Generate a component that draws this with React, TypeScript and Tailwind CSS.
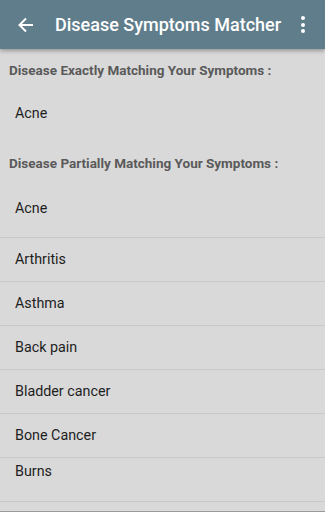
import React from "react";

const font = { fontFamily: "Roboto, 'Noto Sans', sans-serif" };

function Row({ label, className = "" }: { label: string; className?: string }) {
  return (
    <div className={`h-[44px] border-b border-[#c9c9c9] flex items-center pl-[15px] text-[14.3px] text-[#1e1e1e] ${className}`}>
      {label}
    </div>
  );
}

export default function App() {
  return (
    <div className="w-[325px] h-[512px] bg-[#d9d9d9] overflow-hidden flex flex-col" style={font}>
      <div className="h-[49px] shrink-0 bg-[#607d8b] flex items-center shadow-[0_2px_4px_rgba(0,0,0,0.3)] relative z-10">
        <div className="w-[55px] shrink-0 flex justify-center pr-[4px]">
          <svg width="16" height="16" viewBox="0 0 16 16" fill="none">
            <path d="M15 8H2M8 1.5L1.5 8L8 14.5" stroke="white" strokeWidth="2" />
          </svg>
        </div>
        <div className="flex-1 whitespace-nowrap text-white text-[18px] font-medium leading-none">Disease Symptoms Matcher</div>
        <div className="w-[44px] shrink-0 flex justify-center">
          <div className="flex flex-col gap-[2.5px]">
            <span className="w-[4px] h-[4px] rounded-full bg-white" />
            <span className="w-[4px] h-[4px] rounded-full bg-white" />
            <span className="w-[4px] h-[4px] rounded-full bg-white" />
          </div>
        </div>
      </div>
      <div className="h-[42px] flex items-center pl-[9px] whitespace-nowrap text-[13.5px] font-bold text-[#5a5a5a]">
        Disease Exactly Matching Your Symptoms :
      </div>
      <div className="h-[46px] flex items-center pl-[15px] text-[14.3px] text-[#1e1e1e]">Acne</div>
      <div className="h-[52px] flex items-center pl-[9px] whitespace-nowrap text-[13.5px] font-bold text-[#5a5a5a]">
        Disease Partially Matching Your Symptoms :
      </div>
      <div className="h-[49px] border-b border-[#c9c9c9] pt-[9px] pl-[15px] text-[14.3px] leading-[20px] text-[#1e1e1e]">Acne</div>
      <Row label="Arthritis" />
      <Row label="Asthma" />
      <Row label="Back pain" />
      <Row label="Bladder cancer" />
      <Row label="Bone Cancer" />
      <div className="h-[44px] border-b border-[#c9c9c9] pt-[3px] pl-[15px] text-[14.3px] leading-[20px] text-[#1e1e1e]">Burns</div>
      <div className="flex-1" />
      <div className="h-[1px] bg-[#9a9a9a]" />
    </div>
  );
}
